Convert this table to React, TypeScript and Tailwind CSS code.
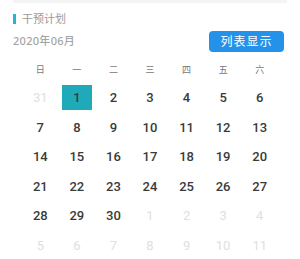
import React from 'react';

const weekdays = ['日', '一', '二', '三', '四', '五', '六'];

interface Day {
  n: number;
  cur: boolean;
}

const buildDays = (): Day[] => {
  const days: Day[] = [{ n: 31, cur: false }];
  for (let i = 1; i <= 30; i++) days.push({ n: i, cur: true });
  for (let i = 1; i <= 11; i++) days.push({ n: i, cur: false });
  return days;
};

export default function App() {
  const days = buildDays();

  return (
    <div className="w-[300px] h-[259px] bg-white overflow-hidden font-['Noto_Sans','Noto_Sans_CJK_SC',sans-serif]">
      <div className="mx-[13px] h-[3px] bg-[#f4f4f4]" />

      <div className="flex items-center gap-[6px] pl-[13px] mt-[10px] h-[11px]">
        <span className="w-[3px] h-[10px] bg-[#26b5cc]" />
        <span className="text-[11px] leading-none text-[#9a9a9a]">干预计划</span>
      </div>

      <div className="flex items-center justify-between pl-[13px] pr-[16px] mt-[7px]">
        <span className="text-[11px] font-medium text-[#a5a5a5] tracking-[0.3px]">2020年06月</span>
        <button className="w-[75px] h-[21px] rounded-[4px] bg-[#2592ea] text-white text-[12px] leading-none tracking-[1px]">
          列表显示
        </button>
      </div>

      <div className="grid grid-cols-7 ml-[22px] w-[256px] mt-[10px]">
        {weekdays.map((w) => (
          <div key={w} className="h-[16px] flex items-center justify-center text-[9px] text-[#777]">
            {w}
          </div>
        ))}
      </div>

      <div className="grid grid-cols-7 ml-[22px] w-[256px] mt-[5px] font-['Roboto',sans-serif]">
        {days.map((d, i) => {
          const selected = d.cur && d.n === 1;
          return (
            <div key={i} className="h-[29.6px] flex items-center justify-center">
              <span
                className={`flex items-center justify-center w-[30px] h-[25px] text-[13px] ${
                  selected
                    ? 'bg-[#1eaab9] text-[#3a3a3a] font-medium'
                    : d.cur
                      ? 'text-[#3a3a3a] font-medium'
                      : 'text-[#e0e0e0]'
                }`}
              >
                {d.n}
              </span>
            </div>
          );
        })}
      </div>
    </div>
  );
}
